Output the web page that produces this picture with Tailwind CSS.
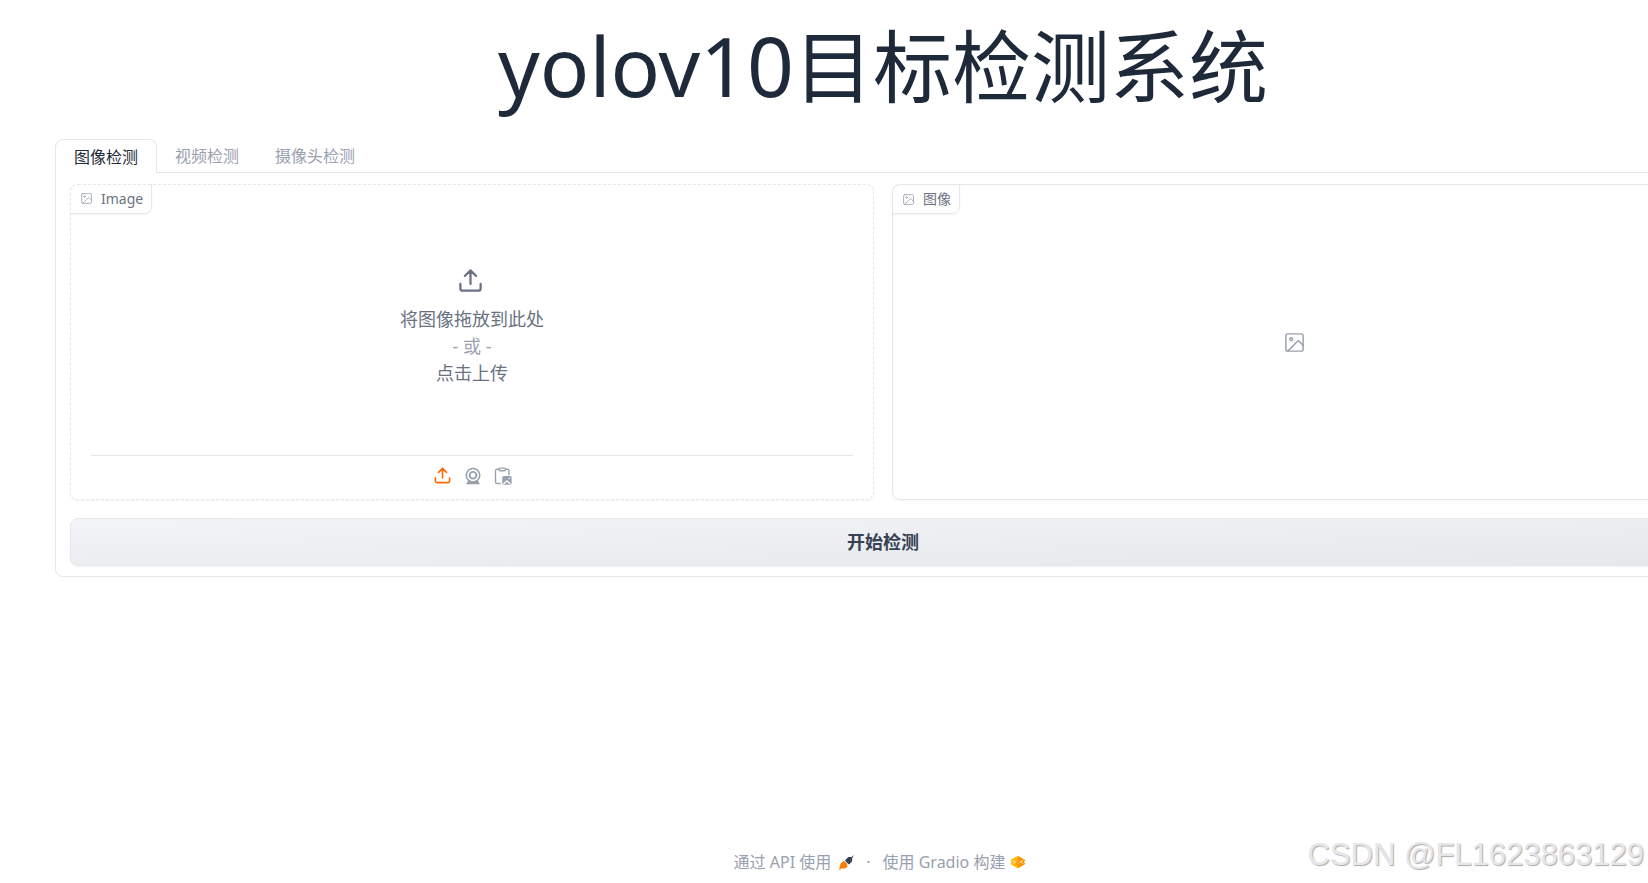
<!DOCTYPE html>
<html lang="zh-CN">
<head>
<meta charset="utf-8">
<title>yolov10目标检测系统</title>
<script src="https://cdn.jsdelivr.net/npm/@tailwindcss/browser@4"></script>
</head>
<body class="relative min-h-screen overflow-hidden bg-white font-['Noto_Sans','Noto_Sans_CJK_SC',sans-serif] text-gray-800">
<svg class="hidden" aria-hidden="true">
  <symbol id="picture" viewBox="0 0 24 24" fill="none" stroke="currentColor" stroke-width="1.5" stroke-linecap="round" stroke-linejoin="round"><rect x="3" y="3" width="18" height="18" rx="2"/><circle cx="8.5" cy="8.5" r="1.5"/><path d="M21 15l-5-5L5 21"/></symbol>
  <symbol id="upload" viewBox="0 0 24 24" fill="none" stroke="currentColor" stroke-width="2" stroke-linecap="round" stroke-linejoin="round"><path d="M21 15v4a2 2 0 0 1-2 2H5a2 2 0 0 1-2-2v-4M17 8l-5-5-5 5M12 3v12"/></symbol>
</svg>
<div class="ml-[55px] flex min-h-screen w-[calc(100%+8px)] flex-col">
  <h1 class="flex h-[139px] items-baseline justify-center pt-[10px] text-[79px] leading-[110px]"><span class="text-[82px]">yolov10</span>目标检测系统</h1>
  <main>
    <div class="relative z-10 -mb-px flex h-[34px]" role="tablist">
      <button role="tab" aria-selected="true" class="rounded-t-lg border border-b-0 border-gray-200 bg-white px-[18px] text-base">图像检测</button>
      <button role="tab" aria-selected="false" class="px-[18px] text-base text-gray-400">视频检测</button>
      <button role="tab" aria-selected="false" class="px-[18px] text-base text-gray-400">摄像头检测</button>
    </div>
    <section class="rounded-b-lg border border-gray-200 px-[14px] pt-[11px] pb-[10px]" role="tabpanel">
      <div class="grid grid-cols-2 gap-[18px]">
        <div class="relative flex h-[316px] flex-col rounded-lg border border-dashed border-gray-200 px-5 shadow-xs">
          <div class="absolute -top-px -left-px flex h-[30px] items-center gap-2 rounded-tl-lg rounded-br-lg border-r border-b border-gray-200 pr-2 pl-[10px] text-sm text-gray-500 shadow-xs"><svg class="size-[13px] text-gray-400"><use href="#picture"/></svg>Image</div>
          <button class="flex flex-1 flex-col items-center justify-center pt-[14px] text-lg leading-[27px] text-gray-500"><svg class="mr-1 mb-3 size-[27px]"><use href="#upload"/></svg>将图像拖放到此处<span class="text-gray-400">- 或 -</span>点击上传</button>
          <div class="flex h-[44px] items-center justify-center gap-3 border-t border-gray-200 pb-1 text-gray-400">
            <button aria-label="上传" class="text-orange-500"><svg class="size-[19px]"><use href="#upload"/></svg></button>
            <button aria-label="摄像头"><svg class="size-[18px]" viewBox="0 0 24 24" fill="none" stroke="currentColor" stroke-width="2.2"><circle cx="12" cy="11" r="9"/><circle cx="12" cy="11" r="4.5" stroke-width="2.6"/><path d="M6 18l-2.5 4.5h17L18 18l-6 2z" fill="currentColor" stroke-width="1"/></svg></button>
            <button aria-label="粘贴图像"><svg class="size-[18px]" viewBox="0 0 24 24" fill="none"><path d="M7 3H4a2 2 0 0 0-2 2v15a2 2 0 0 0 2 2h5M15 3h3a2 2 0 0 1 2 2v6" stroke="currentColor" stroke-width="1.8"/><rect x="7" y="1.5" width="8" height="3.5" rx="1.2" stroke="currentColor" stroke-width="1.8"/><rect x="11" y="12" width="12.5" height="11.5" rx="2" fill="currentColor"/><path d="M12.5 23l4.7-4.5 4.7 4.5" stroke="white" stroke-width="1.7"/><circle cx="20.5" cy="15" r="1.1" fill="white"/></svg></button>
          </div>
        </div>
        <div class="relative flex h-[316px] items-center justify-center rounded-lg border border-gray-200 shadow-xs">
          <div class="absolute -top-px -left-px flex h-[30px] items-center gap-2 rounded-tl-lg rounded-br-lg border border-gray-200 pr-2 pl-[9px] text-sm text-gray-500 shadow-xs"><svg class="size-[13px] text-gray-400"><use href="#picture"/></svg>图像</div>
          <svg class="size-[23px] text-gray-400"><use href="#picture"/></svg>
        </div>
      </div>
      <button class="mt-[18px] h-12 w-full rounded-lg border border-gray-200 bg-linear-to-br from-gray-100 to-gray-200 pb-px text-lg font-semibold text-gray-700 shadow-xs">开始检测</button>
    </section>
  </main>
  <footer class="mt-auto flex h-[33px] items-start justify-center pr-[6px] text-base text-gray-400">
    <a href="#" class="flex items-center">通过 API 使用<svg class="ml-2 size-[15px]" viewBox="0 0 24 24"><path d="M10 8l5-5h5l4-3-3 5v5l-5 5-3-.5-3-3z" fill="#374151"/><path d="M8 9l5 6 .5 4-5 3-4-1-4.500 3 1.500-6 1-5z" fill="#ff7c00"/><path d="M8 8l7.500 7.500" stroke="white" stroke-width="1.2"/></svg></a>
    <span class="mx-3">·</span>
    <a href="#" class="flex items-center">使用 Gradio 构建<svg class="ml-[5px] size-4" viewBox="0 0 24 24" fill="none"><path d="M12 3L23 9l-2 3 2 3-11 6.500L1 15l2-3-2-3z" fill="#ff9100"/><path d="M12 3L1 9l2 3-2 3 11 6.500v-4L6 12l6-3.500z" fill="#ffb800"/><path d="M4 9.500l8 4.500 8-4.500M4 14.500l8-4.500 8 4.500" stroke="#fff3d6" stroke-width="1.200"/><path d="M12 9.500l4 2.500-4 2.500L8 12z" fill="#ff9d00"/></svg></a>
  </footer>
</div>
<div class="absolute right-1 bottom-[10px] font-['Liberation_Sans',sans-serif] text-[31px] leading-9 text-gray-200 [text-shadow:1px_1px_1px_#aaa]">CSDN @FL1623863129</div>
</body>
</html>
